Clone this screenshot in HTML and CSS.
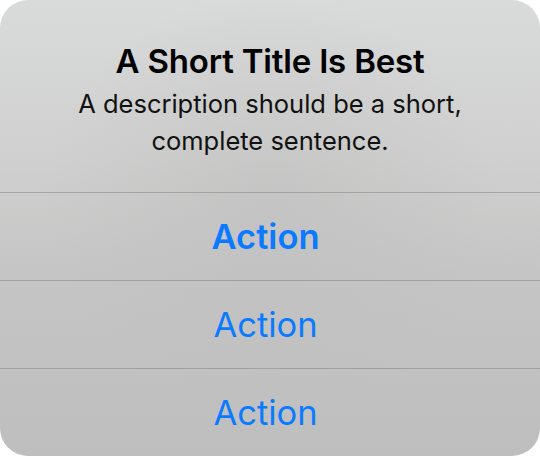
FILE: index.html
```html
<!DOCTYPE html>
<html lang="en">
<head>
  <meta charset="UTF-8">
  <meta name="viewport" content="width=device-width, initial-scale=1.0">
  <title>Alert</title>
  <link rel="stylesheet" href="styles.css">
</head>
<body>
  <div class="alert">
    <!-- title and message -->
    <div class="alert-header">
      <h2 class="alert-title">A Short Title Is Best</h2>
      <p class="alert-message">A description should be a short, complete sentence.</p>
    </div>
    <!-- actions -->
    <div class="alert-actions">
      <button class="alert-action primary">Action</button>
      <button class="alert-action">Action</button>
      <button class="alert-action">Action</button>
    </div>
  </div>
</body>
</html>
```

FILE: styles.css
```css
body {
  margin: 0;
  padding: 0;
  background: #fff;
  font-family: Inter, "Noto Sans", sans-serif;
}
.alert {
  width: 540px;
  height: 456px;
  border-radius: 28px;
  overflow: hidden;
  display: flex;
  flex-direction: column;
  background:
    radial-gradient(ellipse at 50% 45%, rgba(190, 188, 188, 0.5), rgba(190, 188, 188, 0) 60%),
    linear-gradient(180deg, #d9dbda 0%, #cfd0cf 35%, #c6c5c5 60%, #bebebe 100%);
}
.alert-header {
  height: 192px;
  box-sizing: border-box;
  padding: 40px 60px 0;
  text-align: center;
}
.alert-title {
  margin: 0;
  font-size: 33px;
  font-weight: 600;
  line-height: 42px;
  color: #000;
  letter-spacing: -0.2px;
}
.alert-message {
  margin: 3px 0 0;
  font-size: 25.5px;
  line-height: 37px;
  color: #111;
}
.alert-actions {
  display: flex;
  flex-direction: column;
}
.alert-action {
  height: 88px;
  border: none;
  border-top: 1px solid rgba(120, 120, 120, 0.45);
  background: transparent;
  font-family: inherit;
  font-size: 34.5px;
  color: #0a7aff;
  padding: 0 9px 0 0;
  cursor: pointer;
}
.alert-action.primary {
  font-weight: 600;
}
```
